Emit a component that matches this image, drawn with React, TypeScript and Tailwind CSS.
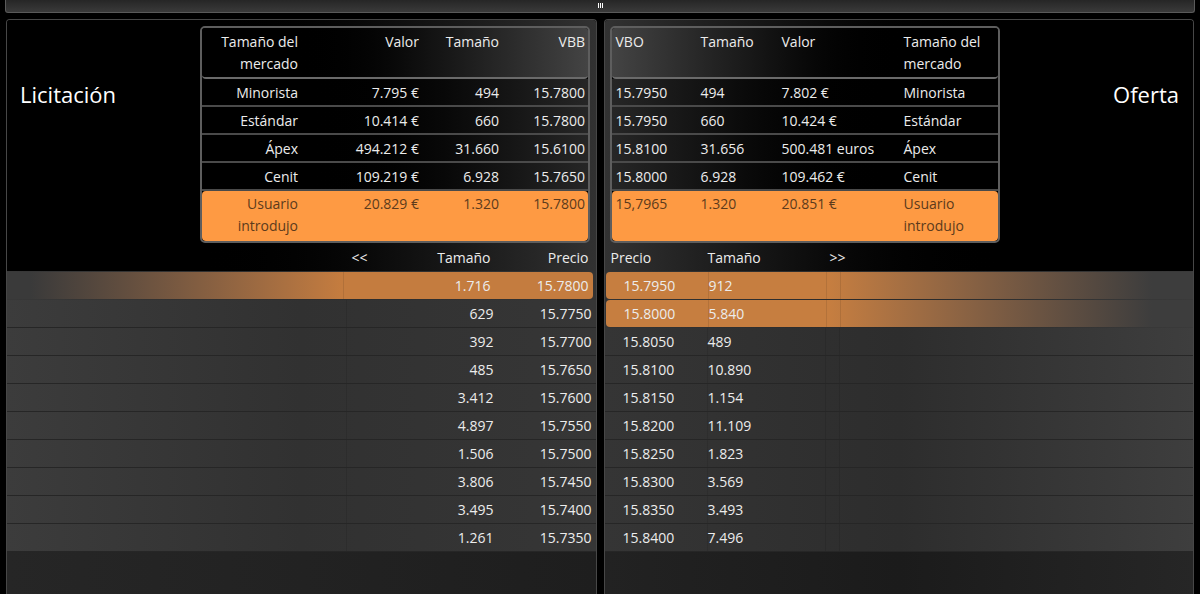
import { ReactNode } from 'react';

type Cells = [string, string, string, string];

const bidTable: Cells[] = [
  ['Minorista', '7.795 €', '494', '15.7800'],
  ['Estándar', '10.414 €', '660', '15.7800'],
  ['Ápex', '494.212 €', '31.660', '15.6100'],
  ['Cenit', '109.219 €', '6.928', '15.7650'],
];

const askTable: Cells[] = [
  ['15.7950', '494', '7.802 €', 'Minorista'],
  ['15.7950', '660', '10.424 €', 'Estándar'],
  ['15.8100', '31.656', '500.481 euros', 'Ápex'],
  ['15.8000', '6.928', '109.462 €', 'Cenit'],
];

const bids = [
  ['1.716', '15.7800'],
  ['629', '15.7750'],
  ['392', '15.7700'],
  ['485', '15.7650'],
  ['3.412', '15.7600'],
  ['4.897', '15.7550'],
  ['1.506', '15.7500'],
  ['3.806', '15.7450'],
  ['3.495', '15.7400'],
  ['1.261', '15.7350'],
];

const asks = [
  ['15.7950', '912'],
  ['15.8000', '5.840'],
  ['15.8050', '489'],
  ['15.8100', '10.890'],
  ['15.8150', '1.154'],
  ['15.8200', '11.109'],
  ['15.8250', '1.823'],
  ['15.8300', '3.569'],
  ['15.8350', '3.493'],
  ['15.8400', '7.496'],
];

const bidCols = 'grid grid-cols-[100px_121px_80px_85px]';
const askCols = 'grid grid-cols-[85px_81px_122px_98px]';

function BidSummary() {
  return (
    <div className="w-[390px] rounded-[5px] border-2 border-[#5e5e5e] overflow-hidden bg-black">
      <div className={`${bidCols} h-[51px] pt-[3px] leading-[22px] text-right rounded-b-[4px] border-b-2 border-[#6a6a6a] bg-gradient-to-r from-black from-[22%] to-[#444444]`}>
        <div className="pr-[4px]">Tamaño del mercado</div>
        <div className="pr-[4px]">Valor</div>
        <div className="pr-[4px]">Tamaño</div>
        <div className="pr-[3px]">VBB</div>
      </div>
      {bidTable.map((r) => (
        <div
          key={r[0]}
          className={`${bidCols} h-[28px] items-center text-right border-b-2 border-[#4a4a4a] bg-gradient-to-r from-black from-[25%] to-[#262626]`}
        >
          <div className="pr-[4px]">{r[0]}</div>
          <div className="pr-[4px]">{r[1]}</div>
          <div className="pr-[4px]">{r[2]}</div>
          <div className="pr-[3px]">{r[3]}</div>
        </div>
      ))}
      <div className={`${bidCols} h-[50px] pt-[2px] leading-[22px] text-right rounded-[4px] bg-[#fe9a43] text-[#5c3a1c]`}>
        <div className="pr-[4px]">Usuario introdujo</div>
        <div className="pr-[4px]">20.829 €</div>
        <div className="pr-[4px]">1.320</div>
        <div className="pr-[3px]">15.7800</div>
      </div>
    </div>
  );
}

function AskSummary() {
  return (
    <div className="w-[390px] rounded-[5px] border-2 border-[#5e5e5e] overflow-hidden bg-black">
      <div className={`${askCols} h-[51px] pt-[3px] leading-[22px] rounded-b-[4px] border-b-2 border-[#6a6a6a] bg-gradient-to-r from-[#444444] to-black to-[78%]`}>
        <div className="pl-[4px]">VBO</div>
        <div className="pl-[4px]">Tamaño</div>
        <div className="pl-[4px]">Valor</div>
        <div className="pl-[4px]">Tamaño del mercado</div>
      </div>
      {askTable.map((r) => (
        <div
          key={r[3]}
          className={`${askCols} h-[28px] items-center border-b-2 border-[#4a4a4a] bg-gradient-to-r from-[#262626] to-black to-[75%]`}
        >
          <div className="pl-[4px]">{r[0]}</div>
          <div className="pl-[4px]">{r[1]}</div>
          <div className="pl-[4px]">{r[2]}</div>
          <div className="pl-[4px]">{r[3]}</div>
        </div>
      ))}
      <div className={`${askCols} h-[50px] pt-[2px] leading-[22px] rounded-[4px] bg-[#fe9a43] text-[#5c3a1c]`}>
        <div className="pl-[4px]">15,7965</div>
        <div className="pl-[4px]">1.320</div>
        <div className="pl-[4px]">20.851 €</div>
        <div className="pl-[4px]">Usuario introdujo</div>
      </div>
    </div>
  );
}

function Panel({ children }: { children: ReactNode }) {
  return (
    <div className="flex-1 h-[575px] flex flex-col rounded-t-[4px] border border-b-0 border-[#474747] overflow-hidden">
      {children}
    </div>
  );
}

export default function App() {
  return (
    <div
      className="w-[1200px] h-[594px] bg-black overflow-hidden text-[14px] text-[#ececec]"
      style={{ fontFamily: '"Open Sans", "Noto Sans", sans-serif' }}
    >
      {/* drag handle strip */}
      <div className="mx-[5px] h-[13px] rounded-b-[3px] border-b border-x border-[#5a5a5a] bg-gradient-to-b from-[#262626] to-[#3a3a3a] flex items-center justify-center">
        <div className="flex gap-[1px] mb-[2px]">
          <span className="w-[1px] h-[5px] bg-white" />
          <span className="w-[1px] h-[5px] bg-white" />
          <span className="w-[1px] h-[5px] bg-white" />
        </div>
      </div>

      <div className="flex gap-[7px] px-[6px] mt-[6px]">
        {/* bid side */}
        <Panel>
          <div className="bg-gradient-to-r from-black from-[30%] to-[#323232]">
            <div className="flex h-[223px] pt-[6px]">
              <div className="w-[193px] pl-[13px] pt-[53px] text-[22px] leading-[30px] text-white">Licitación</div>
              <BidSummary />
            </div>
            <div className="h-[28px] mr-[3px] flex items-center">
              <div className="flex-1" />
              <div className="w-[73px] pl-[9px]">&lt;&lt;</div>
              <div className="w-[75px] text-right">Tamaño</div>
              <div className="w-[102px] text-right pr-[4px]">Precio</div>
            </div>
          </div>
          <div className="flex-1 flex flex-col pt-[1px] bg-gradient-to-r from-[#383838] via-[#2c2c2c] to-[#333333]">
            {bids.map(([size, price], i) => (
              <div
                key={price}
                className={
                  i === 0
                    ? 'h-[27px] mb-[1px] mr-[3px] flex items-center rounded-r-[4px] bg-gradient-to-r from-[#3a3a3a] from-[4%] to-[#c47c3f] to-[57%]'
                    : 'h-[28px] flex items-center border-b border-[#262626] bg-gradient-to-r from-[#3c3c3c] via-[#313131] to-[#363636]'
                }
              >
                <div className="flex-1 self-stretch" />
                <div className="w-[73px] self-stretch border-l border-[#00000018]" />
                <div className="w-[75px] text-right">{size}</div>
                <div className="w-[102px] text-right pr-[4px]">{price}</div>
              </div>
            ))}
            <div className="flex-1 bg-gradient-to-r from-[#262626] via-[#222222] to-[#1e1e1e]" />
          </div>
        </Panel>

        {/* offer side */}
        <Panel>
          <div className="bg-gradient-to-r from-[#323232] to-black to-[70%]">
            <div className="flex h-[223px] pt-[6px]">
              <div className="w-[5px]" />
              <AskSummary />
              <div className="flex-1 pr-[14px] pt-[53px] text-right text-[22px] leading-[30px] text-white">Oferta</div>
            </div>
            <div className="h-[28px] flex items-center">
              <div className="w-[103px] pl-[6px]">Precio</div>
              <div className="w-[122px]">Tamaño</div>
              <div className="flex-1">&gt;&gt;</div>
            </div>
          </div>
          <div className="flex-1 flex flex-col pt-[1px] bg-gradient-to-r from-[#333333] via-[#2a2a2a] to-[#3a3a3a]">
            {asks.map(([price, size], i) => (
              <div
                key={price}
                className={
                  i < 2
                    ? 'h-[27px] mb-[1px] ml-[1px] flex items-center rounded-l-[4px] bg-gradient-to-r from-[#c67e40] from-[38%] to-[#3d3d3d] to-[93%]'
                    : 'h-[28px] flex items-center border-b border-[#262626] bg-gradient-to-r from-[#353535] via-[#2d2d2d] to-[#3e3e3e]'
                }
              >
                <div className="w-[102px] pl-[18px]">{price}</div>
                <div className="w-[118px] self-stretch flex items-center border-l border-[#00000018]">{size}</div>
                <div className="w-[14px] self-stretch border-l border-[#00000018]" />
                <div className="flex-1 self-stretch border-l border-[#00000018]" />
              </div>
            ))}
            <div className="flex-1 bg-gradient-to-r from-[#222222] via-[#1b1b1b] to-[#262626]" />
          </div>
        </Panel>
      </div>
    </div>
  );
}
